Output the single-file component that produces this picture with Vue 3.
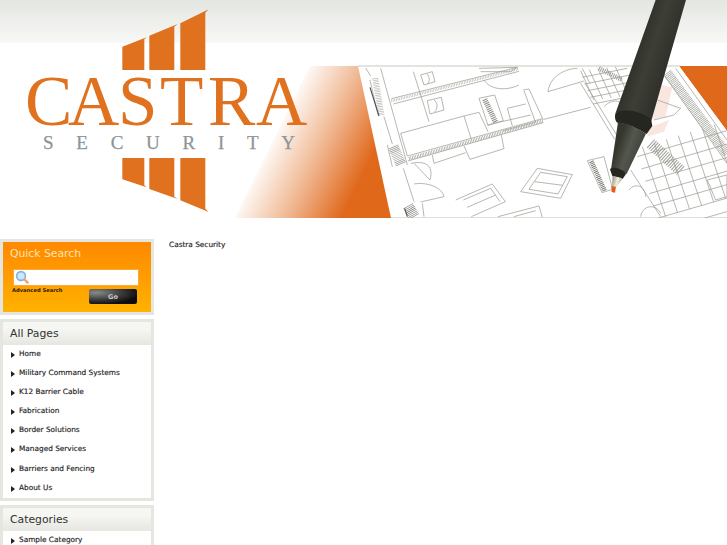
<script setup>
const pages = [
  "Home",
  "Military Command Systems",
  "K12 Barrier Cable",
  "Fabrication",
  "Border Solutions",
  "Managed Services",
  "Barriers and Fencing",
  "About Us"
]

// grid lines of the drawing, bottom right of the banner
const grid = []
for (let i = 0; i < 8; i++) {
  grid.push({ x1: 835 + i * 36, y1: 440 - i * 11, x2: 905 + i * 36, y2: 650 - i * 11 })
}
for (let i = 0; i < 7; i++) {
  grid.push({ x1: 820 + i * 12, y1: 470 + i * 37, x2: 1089 + i * 12, y2: 392 + i * 37 })
}
const topGrid = []
for (let i = 0; i < 5; i++) {
  topGrid.push({ x1: 650 + i * 26, y1: 212 - i * 3, x2: 690 + i * 26, y2: 300 - i * 3 })
  topGrid.push({ x1: 655 + i * 8, y1: 232 + i * 20, x2: 790 + i * 8, y2: 205 + i * 20 })
}
</script>

<template>
  <div class="page">
    <svg class="banner" width="727" height="218" viewBox="0 0 727 218">
      <defs>
        <linearGradient id="topband" x1="0" y1="0" x2="0" y2="1">
          <stop offset="0" stop-color="#e4e6e2" />
          <stop offset="1" stop-color="#f8f9f6" />
        </linearGradient>
        <linearGradient id="fade" gradientUnits="userSpaceOnUse" x1="268" y1="140" x2="358" y2="185">
          <stop offset="0" stop-color="#ffffff" />
          <stop offset="0.5" stop-color="#f0b994" />
          <stop offset="1" stop-color="#e0681b" />
        </linearGradient>
        <linearGradient id="penbody" gradientUnits="userSpaceOnUse" x1="780" y1="200" x2="900" y2="240">
          <stop offset="0" stop-color="#2a2c25" />
          <stop offset="0.5" stop-color="#3d3f37" />
          <stop offset="1" stop-color="#2e3029" />
        </linearGradient>
        <linearGradient id="cone" gradientUnits="userSpaceOnUse" x1="760" y1="440" x2="830" y2="465">
          <stop offset="0" stop-color="#35372f" />
          <stop offset="0.45" stop-color="#54574d" />
          <stop offset="1" stop-color="#3f4138" />
        </linearGradient>
        <linearGradient id="nib" gradientUnits="userSpaceOnUse" x1="745" y1="530" x2="780" y2="540">
          <stop offset="0" stop-color="#8a8a78" />
          <stop offset="0.5" stop-color="#f2f0e0" />
          <stop offset="1" stop-color="#8a8a78" />
        </linearGradient>
        <filter id="soft" x="-5%" y="-5%" width="110%" height="110%">
          <feGaussianBlur stdDeviation="1.1" />
        </filter>
      </defs>

      <rect width="727" height="218" fill="#ffffff" />
      <rect width="727" height="43" fill="url(#topband)" />

      <!-- orange backdrop -->
      <polygon points="310,66 360,66 393,218 235,218" fill="url(#fade)" />
      <polygon points="679,66 727,66 727,131" fill="#e0681b" />

      <!-- plan paper -->
      <polygon points="358,66 679,66 727,131 727,218 391,218" fill="#ffffff" />
      <rect x="358" y="65" width="322" height="2" fill="#d8d8d2" opacity="0.7" />
      <rect x="391" y="217" width="336" height="2" fill="#d8d8d2" opacity="0.8" />

      <g transform="translate(364 0) scale(0.3333)" fill="none" stroke="#9b9d94" stroke-width="2.2" filter="url(#soft)">
        <polygon points="870,250 925,262 905,350 860,360 840,300" fill="#f9e6de" stroke="none" />
        <polygon points="850,385 915,360 900,395 850,410" fill="#f9e6de" stroke="none" />

        <!-- left wall -->
        <path d="M50 205 L112 430 M18 240 L42 345 M60 350 L85 432 M70 435 L85 500 M112 430 L130 495 M5 204 L20 228 M118 505 L150 605 M175 610 L180 650" />
        <path d="M34 235 L52 345" stroke-width="18" stroke-dasharray="2 3" stroke="#b5b7ae" />
        <path d="M88 440 L112 495" stroke-width="32" stroke-dasharray="2 3" />
        <path d="M132 618 L150 650" stroke-width="34" stroke-dasharray="2 3" stroke="#7a7c73" />
        <path d="M18 262 L45 348 M122 625 L130 650" stroke="#50525a" stroke-width="3.4" />

        <!-- bands through the rooms -->
        <path d="M82 303 L462 207" stroke-width="8" stroke-dasharray="2 3" stroke="#b5b7ae" />
        <path d="M135 476 L537 362" stroke-width="11" stroke-dasharray="2 3" />
        <path d="M82 296 L460 202 M88 312 L465 214 M130 468 L535 356 M132 483 L538 368" />

        <!-- rooms -->
        <path d="M110 400 L300 348 L322 418 M110 400 L130 468 M300 348 L345 337 L372 395 M300 438 L318 478 L420 446 L412 405 M205 465 L210 490 L305 458" />
        <path d="M148 215 L195 365 M478 270 L495 267 L538 360 M480 272 L515 368 M430 325 L485 312 M430 325 L445 378 M540 358 L680 322 M370 375 L500 345 M418 392 L510 368" />
        <path d="M345 205 L460 202 L440 215 L350 215" />
        <path d="M360 240 C380 272 430 272 465 255" />
        <path d="M552 275 C558 225 610 205 640 205 M552 275 L660 243" />

        <!-- chairs -->
        <path d="M170 225 L205 215 L213 245 L180 255 Z M188 222 C198 228 198 245 190 252" />
        <path d="M190 302 L232 292 L240 330 L198 342 Z M210 300 C222 308 222 325 212 336" />

        <!-- label boxes -->
        <path d="M345 295 L392 285 L418 362 L372 376 Z" />
        <path d="M362 298 L396 368" stroke-width="16" stroke-dasharray="3 3" stroke="#878980" />
        <path d="M670 482 L720 470 L746 568 L714 578 Z" />
        <path d="M682 484 L722 572" stroke-width="14" stroke-dasharray="3 2.5" stroke="#7a7c73" />

        <!-- doors -->
        <path d="M140 490 C205 478 205 515 198 540 L150 490 M150 552 C195 545 235 565 240 590 L170 606" />

        <!-- furniture -->
        <path d="M520 505 L625 524 L590 595 L470 575 Z M530 517 L610 530 L582 582 L495 568 Z M512 545 L596 556" />
        <path d="M275 600 L385 552 L424 605 L322 650 M298 600 L380 565 L408 605 M310 622 L395 585" />
        <path d="M402 650 L525 618 L535 652 M450 650 L515 632" />

        <!-- right side of the plan -->
        <path d="M650 250 L752 418 M662 248 L758 405 M655 205 L678 250" />
        <line v-for="(l, i) in topGrid" :key="'t' + i" :x1="l.x1" :y1="l.y1" :x2="l.x2" :y2="l.y2" />
        <path d="M705 205 L775 240" stroke-width="14" stroke-dasharray="3 3" />
        <path d="M720 320 C745 295 770 300 775 320 M880 300 L950 325 L930 345 L870 360" />
        <path d="M910 218 L1089 462" stroke-width="28" stroke-dasharray="2 3" />
        <path d="M895 218 L1089 490 M935 205 L1089 420" />
        <line v-for="(l, i) in grid" :key="'g' + i" :x1="l.x1" :y1="l.y1" :x2="l.x2" :y2="l.y2" />
        <path d="M860 430 L950 512" stroke-width="34" stroke-dasharray="3 4" />
        <path d="M800 510 L890 650 M795 570 C815 545 845 560 845 590 M830 650 C835 615 875 610 890 640 M1030 540 L1089 525 L1089 590 L1055 600 Z" />
      </g>

      <!-- pen -->
      <g transform="translate(364 0) scale(0.3333)" stroke="none">
        <path d="M875 0 L966 0 L862 362 C845 350 800 328 755 338 Z" fill="url(#penbody)" />
        <path d="M755 338 C795 322 840 340 862 360 L865 378 L848 402 C820 385 790 370 760 368 C752 360 752 347 755 338 Z" fill="#24261f" />
        <path d="M762 367 C790 370 820 385 846 401 L788 522 L741 508 Z" fill="url(#cone)" />
        <path d="M738 508 C745 498 775 505 786 522 L776 537 L745 528 Z" fill="#24261f" />
        <polygon points="746,527 776,535 757,562 744,558" fill="url(#nib)" />
        <polygon points="742,558 756,560 753,578 743,576" fill="#e85a1a" />
      </g>

      <!-- logo -->
      <g transform="scale(0.3333)" fill="#e0711f">
        <polygon points="367,140 440,112 433,118 433,210 367,210" />
        <polygon points="448,107 533,72 523,80 523,210 448,210" />
        <polygon points="541,70 626,28 616,38 616,210 541,210" />
        <polygon points="367,474 433,474 433,556 440,562 367,538" />
        <polygon points="448,474 523,474 523,590 533,597 448,567" />
        <polygon points="541,474 616,474 616,626 626,636 541,601" />
      </g>
      <text class="castra" x="25 68 118 160 208 256" y="125">CASTRA</text>
      <text class="security" x="43" y="149" textLength="252" lengthAdjust="spacing">SECURITY</text>
    </svg>

    <div class="main">
      <aside class="side">
        <section class="box search">
          <h2>Quick Search</h2>
          <div class="field">
            <svg width="14" height="14" viewBox="0 0 14 14">
              <circle cx="6" cy="6" r="4.4" fill="#cfe6f8" stroke="#7fb2de" stroke-width="1.6" />
              <path d="M9.5 9.5 L12.6 12.6" stroke="#eda36c" stroke-width="2.4" stroke-linecap="round" />
            </svg>
          </div>
          <div class="search-row">
            <a class="advanced">Advanced Search</a>
            <button class="go">Go</button>
          </div>
        </section>

        <section class="box">
          <h2 class="head">All Pages</h2>
          <ul>
            <li v-for="p in pages" :key="p">{{ p }}</li>
          </ul>
        </section>

        <section class="box">
          <h2 class="head">Categories</h2>
          <ul>
            <li>Sample Category</li>
          </ul>
        </section>
      </aside>

      <div class="content">Castra Security</div>
    </div>
  </div>
</template>

<style scoped>
.page {
  width: 727px;
  height: 545px;
  overflow: hidden;
  background: #fff;
  font-family: "DejaVu Sans", sans-serif;
  color: #222;
}

.banner {
  display: block;
}

.castra {
  font-family: "Liberation Serif", serif;
  font-size: 71px;
  fill: #e0711f;
}

.security {
  font-family: "Liberation Serif", serif;
  font-size: 19px;
  fill: #8f9496;
  stroke: #8f9496;
  stroke-width: 0.25px;
}

.main {
  display: flex;
}

.side {
  width: 154px;
  padding-top: 21px;
  display: flex;
  flex-direction: column;
  gap: 4px;
}

.box {
  border: 3px solid #e6e6e1;
  background: #fff;
}

.box h2 {
  margin: 0;
  font-weight: normal;
  font-size: 10.8px;
  padding: 2px 0 0 7px;
  line-height: 20.5px;
}

.search {
  height: 76px;
  box-sizing: border-box;
  background: linear-gradient(#ff8800, #ffb200);
}

.search h2 {
  color: #fde3b8;
}

.field {
  margin: 4.5px 0 0 10px;
  width: 123px;
  height: 14.5px;
  background: #fff;
  border: 1px solid #ffa83a;
  display: flex;
  align-items: center;
  padding-left: 1px;
}

.search-row {
  display: flex;
  justify-content: space-between;
  margin: 0.5px 0 0 9px;
  padding-right: 14px;
}

.advanced {
  font-size: 5.2px;
  font-weight: bold;
  line-height: 9px;
  color: #2a2000;
}

.go {
  width: 48px;
  height: 15px;
  margin-top: 3px;
  padding: 0;
  border: 0;
  border-radius: 2px;
  background: radial-gradient(ellipse at 15% 25%, #8a8a8a 0, #3a3a3a 45%, #0c0c0c 75%);
  color: #ccc;
  font-family: "DejaVu Sans", sans-serif;
  font-size: 6.5px;
  font-weight: bold;
}

.head {
  background: linear-gradient(#f6f6f2 30%, #e6e7e1);
  color: #333;
}

ul {
  list-style: none;
  margin: 0;
  padding: 0;
}

li {
  height: 19.2px;
  line-height: 18.4px;
  font-size: 7.35px;
  padding-left: 16px;
  position: relative;
  color: #1c1c1c;
  -webkit-text-stroke: 0.15px #1c1c1c;
}

li::before {
  content: "";
  position: absolute;
  left: 8px;
  top: 7px;
  border-left: 4px solid #222;
  border-top: 3.5px solid transparent;
  border-bottom: 3.5px solid transparent;
}

.content {
  margin: 21px 0 0 15px;
  font-size: 7.35px;
  line-height: 11px;
  color: #1c1c1c;
  -webkit-text-stroke: 0.15px #1c1c1c;
}
</style>

<style>
html, body {
  overflow: hidden;
}
</style>
